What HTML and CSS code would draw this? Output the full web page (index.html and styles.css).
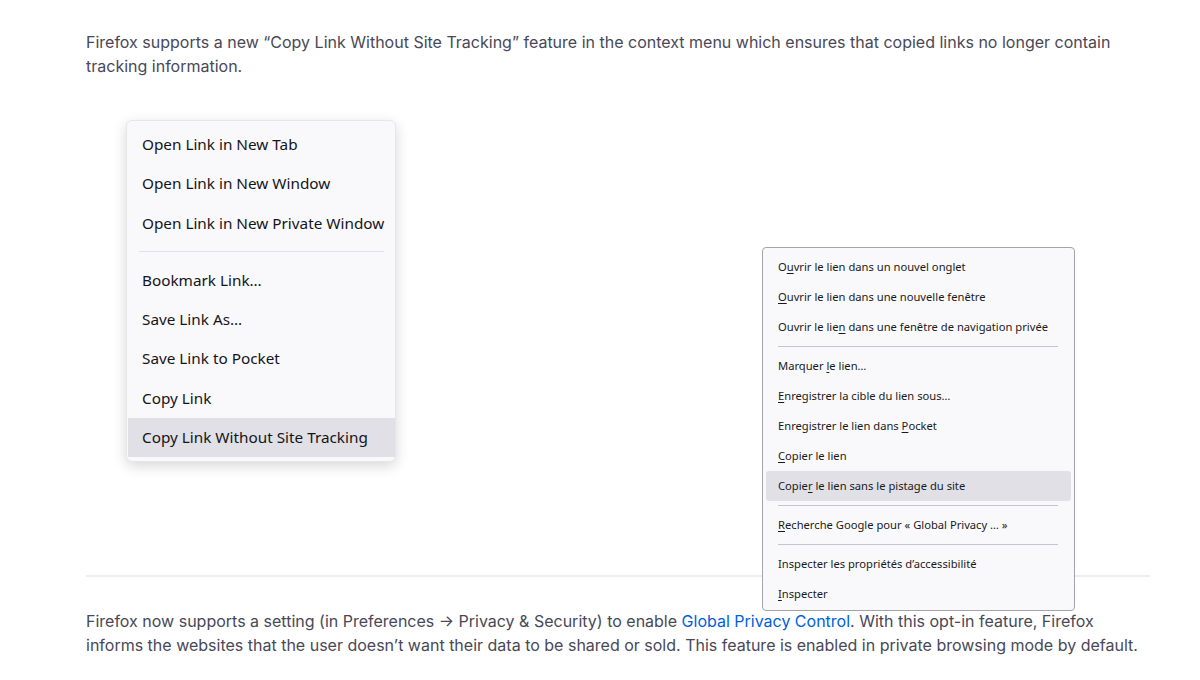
FILE: index.html
```html
<!DOCTYPE html>
<html lang="en">
<head>
    <meta charset="UTF-8" />
    <title>Firefox Release Notes</title>
    <link rel="stylesheet" href="styles.css">
</head>
<body>
<div class="article">
    <p class="note">Firefox supports a new “Copy Link Without Site Tracking” feature in the context menu which ensures that copied links no longer contain tracking information.</p>

    <div class="figure">
        <!-- Menu estilo Windows 11 -->
        <ul class="menu-big">
            <li>Open Link in New Tab</li>
            <li>Open Link in New Window</li>
            <li>Open Link in New Private Window</li>
            <li class="sep"></li>
            <li>Bookmark Link…</li>
            <li>Save Link As…</li>
            <li>Save Link to Pocket</li>
            <li>Copy Link</li>
            <li class="active">Copy Link Without Site Tracking</li>
        </ul>

        <!-- Menu estilo Windows 10 (francés) -->
        <ul class="menu-small">
            <li>O<u>u</u>vrir le lien dans un nouvel onglet</li>
            <li><u>O</u>uvrir le lien dans une nouvelle fenêtre</li>
            <li>Ouvrir le lie<u>n</u> dans une fenêtre de navigation privée</li>
            <li class="sep"></li>
            <li>Marquer <u>l</u>e lien…</li>
            <li><u>E</u>nregistrer la cible du lien sous…</li>
            <li>Enregistrer le lien dans <u>P</u>ocket</li>
            <li><u>C</u>opier le lien</li>
            <li class="active">Copie<u>r</u> le lien sans le pistage du site</li>
            <li class="sep"></li>
            <li><u>R</u>echerche Google pour « Global Privacy … »</li>
            <li class="sep"></li>
            <li>Inspecter les propriétés d’accessibilité</li>
            <li><u>I</u>nspecter</li>
        </ul>
    </div>

    <hr class="divider" />

    <p class="note">Firefox now supports a setting (in Preferences → Privacy &amp; Security) to enable <a href="#">Global Privacy Control</a>. With this opt-in feature, Firefox informs the websites that the user doesn’t want their data to be shared or sold. This feature is enabled in private browsing mode by default.</p>
</div>
</body>
</html>
```

FILE: styles.css
```css
* {
    box-sizing: border-box;
    margin: 0;
    padding: 0;
}

body {
    font-family: Inter, "Liberation Sans", sans-serif;
    background: #fff;
    color: #484857;
}

.article {
    width: 1064px;
    margin-left: 86px;
    padding-top: 30px;
}

.note {
    font-size: 16px;
    line-height: 24px;
}

.note a {
    color: #0060df;
    text-decoration: none;
}

/* Figure with both menus */
.figure {
    display: flex;
    align-items: flex-start;
    height: 497px;
    padding-top: 42px;
    padding-left: 40px;
}

.menu-big {
    list-style: none;
    width: 270px;
    padding: 4px 0 4px 1px;
    background: #f9f9fb;
    border: 1px solid #e6e6ea;
    border-radius: 6px;
    box-shadow: 0 4px 14px rgba(0,0,0,0.16);
    font-family: "Noto Sans", "Open Sans", sans-serif;
    font-size: 15.3px;
    color: #15141a;
}

.menu-big li {
    height: 39.3px;
    line-height: 39.3px;
    padding-left: 14px;
    white-space: nowrap;
}

.menu-big li.sep {
    height: 18px;
    margin: 0 11px;
    padding: 0;
    background: linear-gradient(#e2e2e6, #e2e2e6) center / 100% 1px no-repeat;
}

.menu-big li.active {
    background: #e0e0e6;
}

.menu-small {
    position: relative;
    z-index: 1;
    list-style: none;
    width: 313px;
    margin-left: 366px;
    margin-top: 127px;
    padding: 4px 3px 1px 3px;
    background: #f9f9fb;
    border: 1px solid #a3a3a8;
    border-radius: 4px;
    font-family: "Noto Sans", "Open Sans", sans-serif;
    font-size: 11.2px;
    color: #1a1a1a;
}

.menu-small li {
    height: 30px;
    line-height: 30px;
    padding-left: 12px;
    white-space: nowrap;
}

.menu-small li.sep {
    height: 9px;
    margin: 0 13px 0 12px;
    padding: 0;
    background: linear-gradient(#c6c6ca, #c6c6ca) center / 100% 1px no-repeat;
}

.menu-small li.active {
    background: #e0e0e6;
    border-radius: 3px;
}

.menu-small u {
    text-underline-offset: 2px;
}

.divider {
    border: none;
    border-top: 2px solid #eeeef1;
    margin-bottom: 32px;
}
```
